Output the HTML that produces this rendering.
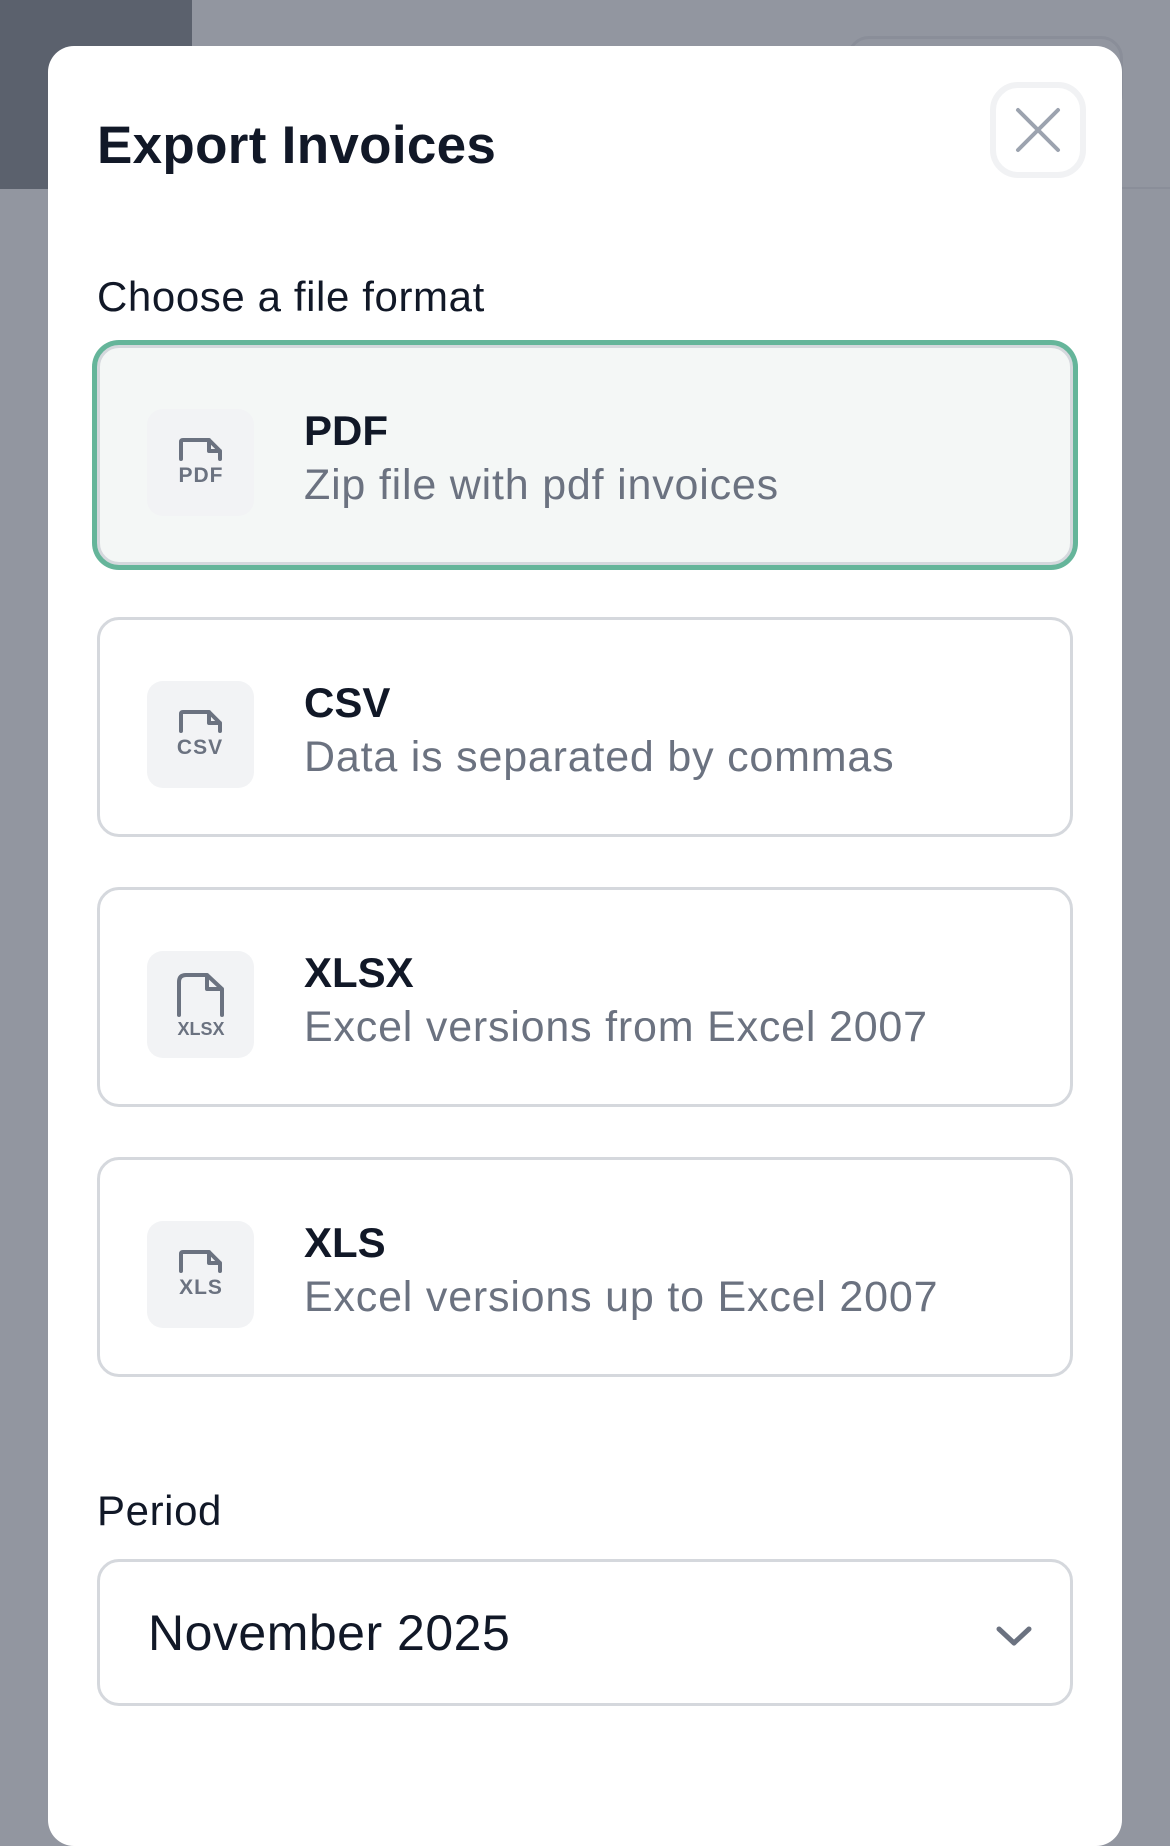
<!DOCTYPE html>
<html><head><meta charset="utf-8"><style>
*{margin:0;padding:0;box-sizing:border-box}
body{width:1170px;height:1786px;background:#9296a0;position:relative;overflow:hidden;font-family:"Liberation Sans",sans-serif}
.dark{position:absolute;left:0;top:0;width:192px;height:189px;background:#5b616d}
.hline{position:absolute;left:192px;right:0;top:187px;height:2px;background:#8a8e99}
.ghost{position:absolute;left:847px;top:36px;width:276px;height:80px;border:3px solid #8a8e99;border-radius:22px}
.modal{position:absolute;left:48px;top:46px;width:1074px;height:1800px;background:#fff;border-radius:26px}
.title{position:absolute;left:97px;top:115px;font-size:53px;font-weight:bold;color:#111827;letter-spacing:0.3px}
.close{position:absolute;left:990px;top:82px;width:96px;height:96px;border:6px solid #f1f2f4;border-radius:28px}
.lbl{position:absolute;left:97px;font-size:42px;color:#111827;letter-spacing:0.6px}
.card{position:absolute;left:97px;width:976px;height:220px;border:3px solid #d5d8dd;border-radius:22px;background:#fff}
.card.sel{background:#f4f7f6;box-shadow:0 0 0 5px #65b59a}
.ib{position:absolute;left:47px;top:61px;width:107px;height:107px;background:#f2f3f5;border-radius:16px}
.ct{position:absolute;left:204px;top:59px;font-size:42px;font-weight:bold;color:#111827}
.cs{position:absolute;left:204px;top:113px;font-size:43px;color:#6b7280;letter-spacing:0.8px}
.sel2{position:absolute;left:97px;top:1559px;width:976px;height:147px;border:3px solid #d5d8dd;border-radius:22px}
.sel2 span{position:absolute;left:48px;top:42px;font-size:50px;color:#111827;letter-spacing:0.5px}
</style></head><body>
<div class="dark"></div><div class="hline"></div><div class="ghost"></div>
<div class="modal"></div>
<div class="title">Export Invoices</div>
<div class="close"><svg width="84" height="84" viewBox="0 0 84 84" style="position:absolute;left:0;top:0"><path d="M22 22L62 62M62 22L22 62" stroke="#9ca3af" stroke-width="4" stroke-linecap="round"/></svg></div>
<div class="lbl" style="top:273px">Choose a file format</div>

<div class="card sel" style="top:345px"><div class="ib"><svg width="107" height="107" viewBox="0 0 107 107"><path d="M34 50V33Q34 31 36 31H62L73 42V50M62 31V42H73" fill="none" stroke="#6b7280" stroke-width="4" stroke-linejoin="round" stroke-linecap="round"/><text x="54" y="73" text-anchor="middle" font-size="21" font-weight="bold" fill="#6b7280" font-family="Liberation Sans" letter-spacing="1">PDF</text></svg></div><div class="ct">PDF</div><div class="cs">Zip file with pdf invoices</div></div>

<div class="card" style="top:617px"><div class="ib"><svg width="107" height="107" viewBox="0 0 107 107"><path d="M34 50V33Q34 31 36 31H62L73 42V50M62 31V42H73" fill="none" stroke="#6b7280" stroke-width="4" stroke-linejoin="round" stroke-linecap="round"/><text x="53" y="73" text-anchor="middle" font-size="21" font-weight="bold" fill="#6b7280" font-family="Liberation Sans" letter-spacing="1">CSV</text></svg></div><div class="ct">CSV</div><div class="cs">Data is separated by commas</div></div>

<div class="card" style="top:887px"><div class="ib"><svg width="107" height="107" viewBox="0 0 107 107"><path d="M32 64V31Q32 24 39 24H60L75 38V64M60 24V38H75" fill="none" stroke="#6b7280" stroke-width="4" stroke-linejoin="round" stroke-linecap="round"/><text x="54" y="84" text-anchor="middle" font-size="18" font-weight="bold" fill="#6b7280" font-family="Liberation Sans">XLSX</text></svg></div><div class="ct">XLSX</div><div class="cs">Excel versions from Excel 2007</div></div>

<div class="card" style="top:1157px"><div class="ib"><svg width="107" height="107" viewBox="0 0 107 107"><path d="M34 50V33Q34 31 36 31H62L73 42V50M62 31V42H73" fill="none" stroke="#6b7280" stroke-width="4" stroke-linejoin="round" stroke-linecap="round"/><text x="54" y="73" text-anchor="middle" font-size="21" font-weight="bold" fill="#6b7280" font-family="Liberation Sans" letter-spacing="1">XLS</text></svg></div><div class="ct">XLS</div><div class="cs">Excel versions up to Excel 2007</div></div>

<div class="lbl" style="top:1487px">Period</div>
<div class="sel2"><span>November 2025</span><svg width="40" height="24" viewBox="0 0 40 24" style="position:absolute;left:894px;top:62px"><path d="M5 5L20 19L35 5" fill="none" stroke="#6b7280" stroke-width="5" stroke-linecap="round" stroke-linejoin="round"/></svg></div>
</body></html>
